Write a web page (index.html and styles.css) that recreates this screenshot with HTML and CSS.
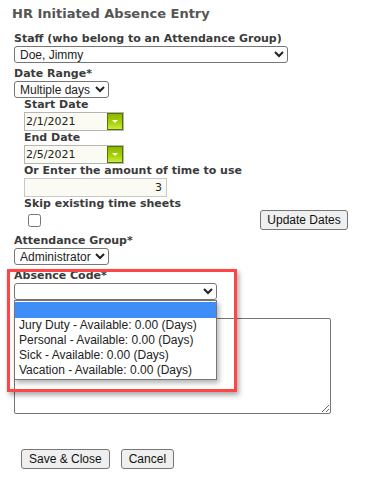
FILE: index.html
```html
<!DOCTYPE html>
<html lang="en">
<head>
    <meta charset="UTF-8">
    <title>HR Initiated Absence Entry</title>
    <link rel="stylesheet" href="styles.css">
</head>
<body>
    <h1 class="title">HR Initiated Absence Entry</h1>
    <form class="entry">
        <label class="lbl">Staff (who belong to an Attendance Group)</label>
        <select class="sel sel-staff"><option>Doe, Jimmy</option></select>

        <label class="lbl">Date Range*</label>
        <select class="sel sel-short"><option>Multiple days</option></select>

        <div class="dates">
            <label class="lbl">Start Date</label>
            <div class="date-input">
                <input type="text" value="2/1/2021">
                <span class="date-btn"><span class="tri"></span></span>
            </div>
            <label class="lbl">End Date</label>
            <div class="date-input">
                <input type="text" value="2/5/2021">
                <span class="date-btn"><span class="tri"></span></span>
            </div>
            <label class="lbl">Or Enter the amount of time to use</label>
            <input class="amount" type="text" value="3">
            <label class="lbl">Skip existing time sheets</label>
            <div class="skip-row">
                <input type="checkbox" class="chk">
                <button type="button" class="btn">Update Dates</button>
            </div>
        </div>

        <label class="lbl">Attendance Group*</label>
        <select class="sel sel-short"><option>Administrator</option></select>

        <div class="absence">
            <label class="lbl">Absence Code*</label>
            <select class="sel sel-code"><option></option></select>
            <div class="highlight-box"></div>
            <ul class="popup">
                <li class="active">&nbsp;</li>
                <li>Jury Duty - Available: 0.00 (Days)</li>
                <li>Personal - Available: 0.00 (Days)</li>
                <li>Sick - Available: 0.00 (Days)</li>
                <li>Vacation - Available: 0.00 (Days)</li>
            </ul>
        </div>

        <textarea class="notes"></textarea>

        <div class="actions">
            <button type="button" class="btn">Save &amp; Close</button>
            <button type="button" class="btn">Cancel</button>
        </div>
    </form>
</body>
</html>
```

FILE: styles.css
```css
body {
    margin: 0;
    padding: 0;
    background-color: white;
    font-family: "DejaVu Sans", Verdana, sans-serif;
    color: #3b3b3b;
}
.title {
    font-size: 13px;
    line-height: 16px;
    color: #555;
    margin: 6px 0 0 12px;
}
.entry {
    padding: 10px 0 0 14px;
}
.lbl {
    display: block;
    font-size: 11px;
    font-weight: bold;
    line-height: 14px;
    margin-top: 4px;
}
.entry > .lbl:first-child {
    margin-top: 0;
}
.dates .lbl {
    margin-top: 0;
}
.sel {
    display: block;
    font-family: "Liberation Sans", Arial, sans-serif;
    font-size: 12px;
    height: 17px;
    padding: 0 0 0 1px;
    margin: 0;
    border: 1px solid #767676;
    border-radius: 3px;
    background-color: white;
    color: #222;
}
.sel-staff {
    width: 274px;
}
.sel-short {
    width: 95px;
}
.sel-code {
    width: 203px;
}
.dates {
    padding-left: 10px;
}
.date-input {
    display: flex;
    width: 100px;
    height: 19px;
    border: 1px solid #b5b5b5;
    box-sizing: border-box;
    background-color: #fbfbf3;
}
.date-input input {
    flex: 1;
    width: 0;
    border: none;
    background: transparent;
    padding: 0 0 0 1px;
    font-family: "DejaVu Sans", Verdana, sans-serif;
    font-size: 11px;
    color: #222;
    outline: none;
}
.date-btn {
    width: 16px;
    border: 1px solid #557300;
    box-sizing: border-box;
    background: linear-gradient(#8fb400, #a8d400 60%, #c9ea4a);
    display: flex;
    align-items: center;
    justify-content: center;
}
.tri {
    width: 0;
    height: 0;
    border-left: 3px solid transparent;
    border-right: 3px solid transparent;
    border-top: 3px solid white;
}
.amount {
    display: block;
    width: 143px;
    height: 19px;
    margin: 0;
    box-sizing: border-box;
    border: 1px solid #c8c8c8;
    background-color: #fbfbf3;
    text-align: right;
    padding: 0 4px 0 0;
    font-family: "DejaVu Sans", Verdana, sans-serif;
    font-size: 11px;
    color: #222;
}
.skip-row {
    display: flex;
    justify-content: space-between;
    align-items: flex-start;
    width: 324px;
    height: 19px;
}
.chk {
    width: 13px;
    height: 13px;
    margin: 3px 0 0 4px;
}
.btn {
    font-family: "Liberation Sans", Arial, sans-serif;
    font-size: 12px;
    height: 20px;
    padding: 0 6px;
    border: 1px solid #767676;
    border-radius: 3px;
    background-color: #efefef;
    color: #111;
}
.skip-row .btn {
    width: 88px;
    margin-top: -1px;
}
.absence {
    position: relative;
    margin-top: 4px;
}
.absence .lbl {
    margin-top: 0;
}
.highlight-box {
    position: absolute;
    left: -7px;
    top: 0;
    width: 230px;
    height: 123px;
    box-sizing: border-box;
    border: 3px solid #ff4545;
    box-shadow: 2px 3px 5px rgba(0, 0, 0, 0.35);
    z-index: 3;
    pointer-events: none;
}
.popup {
    position: absolute;
    left: 0;
    top: 31px;
    width: 203px;
    margin: 0;
    padding: 1px 0;
    list-style: none;
    box-sizing: border-box;
    border: 1px solid #767676;
    background-color: white;
    box-shadow: 2px 3px 5px rgba(0, 0, 0, 0.3);
    z-index: 2;
    font-family: "Liberation Sans", Arial, sans-serif;
    font-size: 12px;
    color: #222;
}
.popup li {
    height: 15px;
    line-height: 15px;
    padding-left: 4px;
    white-space: nowrap;
}
.popup li.active {
    height: 16px;
    background-color: #3f8ef7;
}
.notes {
    display: block;
    width: 317px;
    height: 96px;
    box-sizing: border-box;
    margin-top: 18px;
    border: 1px solid #767676;
    border-radius: 2px;
    resize: both;
}
.actions {
    display: flex;
    gap: 11px;
    margin: 35px 0 0 7px;
}
.actions .btn {
    padding: 0 7px;
}
```
